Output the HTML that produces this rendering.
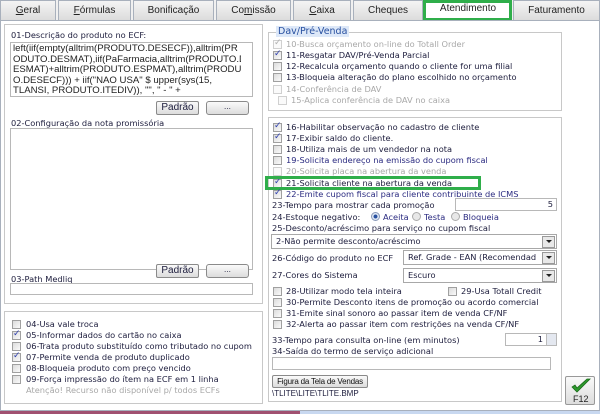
<!DOCTYPE html>
<html><head><meta charset="utf-8"><style>
*{box-sizing:border-box;margin:0;padding:0}
body{width:600px;height:414px;overflow:hidden;background:#f0f0f0;font-family:"DejaVu Sans","Liberation Sans",sans-serif;font-size:8.25px;color:#1c1c3c;position:relative}
.a{position:absolute;white-space:nowrap}
.tab{position:absolute;top:0;height:20px;border:1px solid #a8b0bc;border-bottom:none;background:linear-gradient(#f4f4f4,#dcdcdc);font-family:"Liberation Sans",sans-serif;font-size:10px;color:#222;text-align:center;line-height:19px}
.grp{position:absolute;border:1px solid #c8c8c8;background:#fff}
.cb{position:absolute;width:9px;height:9px;border:1px solid #a0a0a0;background:linear-gradient(135deg,#dcdcdc,#fafafa)}
.cb.k::after{content:"✓";position:absolute;left:0;top:-3px;font-size:9px;color:#3040b0;font-weight:bold}
.cb.d{border-color:#d0d0d0;background:#fafafa}
.cb.d.k::after{color:#b0b0b0}
.dis{color:#a8a8a8}
.blu{color:#2a2a80}
.box{position:absolute;border:1px solid #b8b8b8;background:#fff}
.btn{position:absolute;border:1px solid #8a8a8a;border-radius:3px;background:linear-gradient(#fafafa,#dcdcdc);text-align:center;font-family:"Liberation Sans",sans-serif;white-space:nowrap}
.sel{position:absolute;border:1px solid #a8a8a8;background:#fff;padding-left:4px;line-height:13px;white-space:nowrap}
.sel::after{content:"";position:absolute;right:1px;top:1px;width:11px;height:10px;border:1px solid #999;background:#e8e8e8}
.sel i{position:absolute;right:4px;top:5px;border:3px solid transparent;border-top:3px solid #222;z-index:2}
</style></head><body>
<div class="tab" style="left:0;width:56px"><u>G</u>eral</div>
<div class="tab" style="left:58px;width:73px"><u>F</u>órmulas</div>
<div class="tab" style="left:133px;width:81px">Bonificação</div>
<div class="tab" style="left:216px;width:75px">Co<u>m</u>issão</div>
<div class="tab" style="left:293px;width:58px"><u>C</u>aixa</div>
<div class="tab" style="left:353px;width:70px">Cheques</div>
<div class="tab" style="left:425px;width:86px;background:#fff;height:21px;line-height:16px">Atendimento</div>
<div class="tab" style="left:513px;width:87px">Faturamento</div>
<div class="a" style="left:423px;top:0;width:89px;height:21px;border:3px solid #2fae4a"></div>
<div class="a" style="left:0;top:20px;width:600px;height:391px;background:#fff;border:1px solid #a8b0bc"></div>

<div class="grp" style="left:4px;top:24px;width:259px;height:280px"></div>
<div class="a" style="left:11px;top:30px">01-Descrição do produto no ECF:</div>
<div class="box" style="left:10px;top:42px;width:243px;height:55px;overflow:hidden;font-family:'Liberation Sans',sans-serif;font-size:9.6px;line-height:10.5px;padding:1px 0 0 2px;white-space:pre;color:#222">left(iif(empty(alltrim(PRODUTO.DESECF)),alltrim(PR
ODUTO.DESMAT),iif(PaFarmacia,alltrim(PRODUTO.D
ESMAT)+alltrim(PRODUTO.ESPMAT),alltrim(PRODUT
O.DESECF))) + iif("NAO USA" $ upper(sys(15,
TLANSI, PRODUTO.ITEDIV)), "", " - " +</div>
<div class="a" style="left:241px;top:43px;width:11px;height:53px;background:#fff"></div>
<div class="btn" style="left:156px;top:101px;width:43px;height:14px;font-size:10px;line-height:12px;border-radius:2px">Padrão</div>
<div class="btn" style="left:206px;top:101px;width:43px;height:14px;line-height:10px">...</div>
<div class="a" style="left:11px;top:118px">02-Configuração da nota promissória</div>
<div class="box" style="left:10px;top:128px;width:243px;height:142px"></div>
<div class="btn" style="left:156px;top:264px;width:43px;height:14px;font-size:10px;line-height:12px;border-radius:2px">Padrão</div>
<div class="btn" style="left:206px;top:264px;width:43px;height:14px;line-height:10px">...</div>
<div class="a" style="left:11px;top:274px">03-Path Medliq</div>
<div class="box" style="left:10px;top:283px;width:243px;height:12px"></div>

<div class="grp" style="left:4px;top:311px;width:259px;height:93px"></div>
<div class="cb" style="left:12px;top:320px"></div><div class="a" style="left:26px;top:319px">04-Usa vale troca</div>
<div class="cb k" style="left:12px;top:331px"></div><div class="a" style="left:26px;top:330px">05-Informar dados do cartão no caixa</div>
<div class="cb" style="left:12px;top:342px"></div><div class="a" style="left:26px;top:341px">06-Trata produto substituído como tributado no cupom</div>
<div class="cb k" style="left:12px;top:353px"></div><div class="a" style="left:26px;top:352px">07-Permite venda de produto duplicado</div>
<div class="cb" style="left:12px;top:364px"></div><div class="a" style="left:26px;top:363px">08-Bloqueia produto com preço vencido</div>
<div class="cb" style="left:12px;top:375px"></div><div class="a" style="left:26px;top:374px">09-Força impressão do ítem na ECF em 1 linha</div>
<div class="a dis" style="left:26px;top:385px">Atenção! Recurso não disponível p/ todos ECFs</div>

<div class="grp" style="left:268px;top:32px;width:294px;height:79px"></div>
<div class="a" style="left:276px;top:26px;background:#dde8f8;color:#2850a0;font-size:9.5px;padding:0 2px">Dav/Pré-Venda</div>
<div class="cb d k" style="left:273px;top:40px"></div><div class="a dis" style="left:286px;top:39px">10-Busca orçamento on-line do Totall Order</div>
<div class="cb k" style="left:273px;top:51px"></div><div class="a" style="left:286px;top:50px">11-Resgatar DAV/Pré-Venda Parcial</div>
<div class="cb" style="left:273px;top:62px"></div><div class="a" style="left:286px;top:61px">12-Recalcula orçamento quando o cliente for uma filial</div>
<div class="cb" style="left:273px;top:73px"></div><div class="a" style="left:286px;top:72px">13-Bloqueia alteração do plano escolhido no orçamento</div>
<div class="cb d" style="left:273px;top:85px"></div><div class="a dis" style="left:286px;top:84px">14-Conferência de DAV</div>
<div class="cb d" style="left:278px;top:96px"></div><div class="a dis" style="left:291px;top:95px">15-Aplica conferência de DAV no caixa</div>

<div class="grp" style="left:268px;top:117px;width:294px;height:285px"></div>
<div class="cb k" style="left:273px;top:123px"></div><div class="a" style="left:286px;top:122px">16-Habilitar observação no cadastro de cliente</div>
<div class="cb k" style="left:273px;top:134px"></div><div class="a" style="left:286px;top:133px">17-Exibir saldo do cliente.</div>
<div class="cb" style="left:273px;top:145px"></div><div class="a" style="left:286px;top:144px">18-Utiliza mais de um vendedor na nota</div>
<div class="cb" style="left:273px;top:156px"></div><div class="a blu" style="left:286px;top:155px">19-Solicita endereço na emissão do cupom fiscal</div>
<div class="cb d" style="left:273px;top:167px"></div><div class="a dis" style="left:286px;top:166px">20-Solicita placa na abertura da venda</div>
<div class="cb k" style="left:273px;top:179px"></div><div class="a" style="left:286px;top:178px">21-Solicita cliente na abertura da venda</div>
<div class="a" style="left:265px;top:176px;width:216px;height:14px;border:3px solid #2fae4a"></div>
<div class="cb k" style="left:273px;top:190px"></div><div class="a blu" style="left:286px;top:189px">22-Emite cupom fiscal para cliente contribuinte de ICMS</div>
<div class="a" style="left:272px;top:200px">23-Tempo para mostrar cada promoção</div>
<div class="box" style="left:455px;top:198px;width:102px;height:13px;text-align:right;padding-right:3px;line-height:11px">5</div>
<div class="a" style="left:272px;top:212px">24-Estoque negativo:</div>
<div class="a" style="left:371px;top:212px;width:9px;height:9px;border-radius:50%;border:1px solid #8898b8;background:radial-gradient(#2850a0 35%,#e0e8f4 45%)"></div>
<div class="a blu" style="left:383px;top:212px">Aceita</div>
<div class="a" style="left:412px;top:212px;width:9px;height:9px;border-radius:50%;border:1px solid #aaa;background:#e8e8e8"></div>
<div class="a blu" style="left:424px;top:212px">Testa</div>
<div class="a" style="left:451px;top:212px;width:9px;height:9px;border-radius:50%;border:1px solid #aaa;background:#e8e8e8"></div>
<div class="a blu" style="left:463px;top:212px">Bloqueia</div>
<div class="a" style="left:272px;top:223px">25-Desconto/acréscimo para serviço no cupom fiscal</div>
<div class="sel" style="left:271px;top:234px;width:286px;height:15px">2-Não permite desconto/acréscimo<i></i></div>
<div class="a" style="left:272px;top:253px">26-Código do produto no ECF</div>
<div class="sel" style="left:403px;top:250px;width:154px;height:15px;overflow:hidden">Ref. Grade - EAN (Recomendad<i></i></div>
<div class="a" style="left:272px;top:270px">27-Cores do Sistema</div>
<div class="sel" style="left:403px;top:268px;width:154px;height:15px">Escuro<i></i></div>
<div class="cb" style="left:273px;top:287px"></div><div class="a" style="left:286px;top:286px">28-Utilizar modo tela inteira</div>
<div class="cb" style="left:448px;top:287px"></div><div class="a" style="left:461px;top:286px">29-Usa Totall Credit</div>
<div class="cb" style="left:273px;top:298px"></div><div class="a" style="left:286px;top:297px">30-Permite Desconto itens de promoção ou acordo comercial</div>
<div class="cb" style="left:273px;top:309px"></div><div class="a" style="left:286px;top:308px">31-Emite sinal sonoro ao passar item de venda CF/NF</div>
<div class="cb" style="left:273px;top:320px"></div><div class="a" style="left:286px;top:319px">32-Alerta ao passar item com restrições na venda CF/NF</div>
<div class="a" style="left:272px;top:335px">33-Tempo para consulta on-line (em minutos)</div>
<div class="box" style="left:505px;top:333px;width:52px;height:13px;text-align:right;padding-right:13px;line-height:11px">1</div>
<div class="a" style="left:546px;top:334px;width:10px;height:11px;background:#e4e8f0;border-left:1px solid #bbb"></div>
<div class="a" style="left:272px;top:346px">34-Saída do termo de serviço adicional</div>
<div class="box" style="left:272px;top:357px;width:279px;height:13px"></div>
<div class="btn" style="left:272px;top:375px;width:96px;height:13px;font-size:8px;line-height:11px;border-radius:2px;color:#111;letter-spacing:-0.2px">Figura da Tela de Vendas</div>
<div class="a" style="left:272px;top:389px;font-family:'Liberation Sans',sans-serif;font-size:8px">\TLITE\LITE\TLITE.BMP</div>

<div class="btn" style="left:565px;top:376px;width:30px;height:29px;border-radius:2px;border-color:#999">
<svg width="22" height="16" viewBox="0 0 22 16" style="position:absolute;left:4px;top:1px"><path d="M2 9 L7 14 L20 1 L17 1 L7 10 L5 7 Z" fill="#2e9a2e" stroke="#1a6a1a" stroke-width="0.8"/></svg>
<div class="a" style="left:7px;top:17px;font-size:9px;color:#222">F12</div></div>

<div class="a" style="left:0;top:411px;width:300px;height:3px;background:#a05070"></div>
<div class="a" style="left:300px;top:411px;width:300px;height:3px;background:#c8d8f0"></div>
</body></html>
